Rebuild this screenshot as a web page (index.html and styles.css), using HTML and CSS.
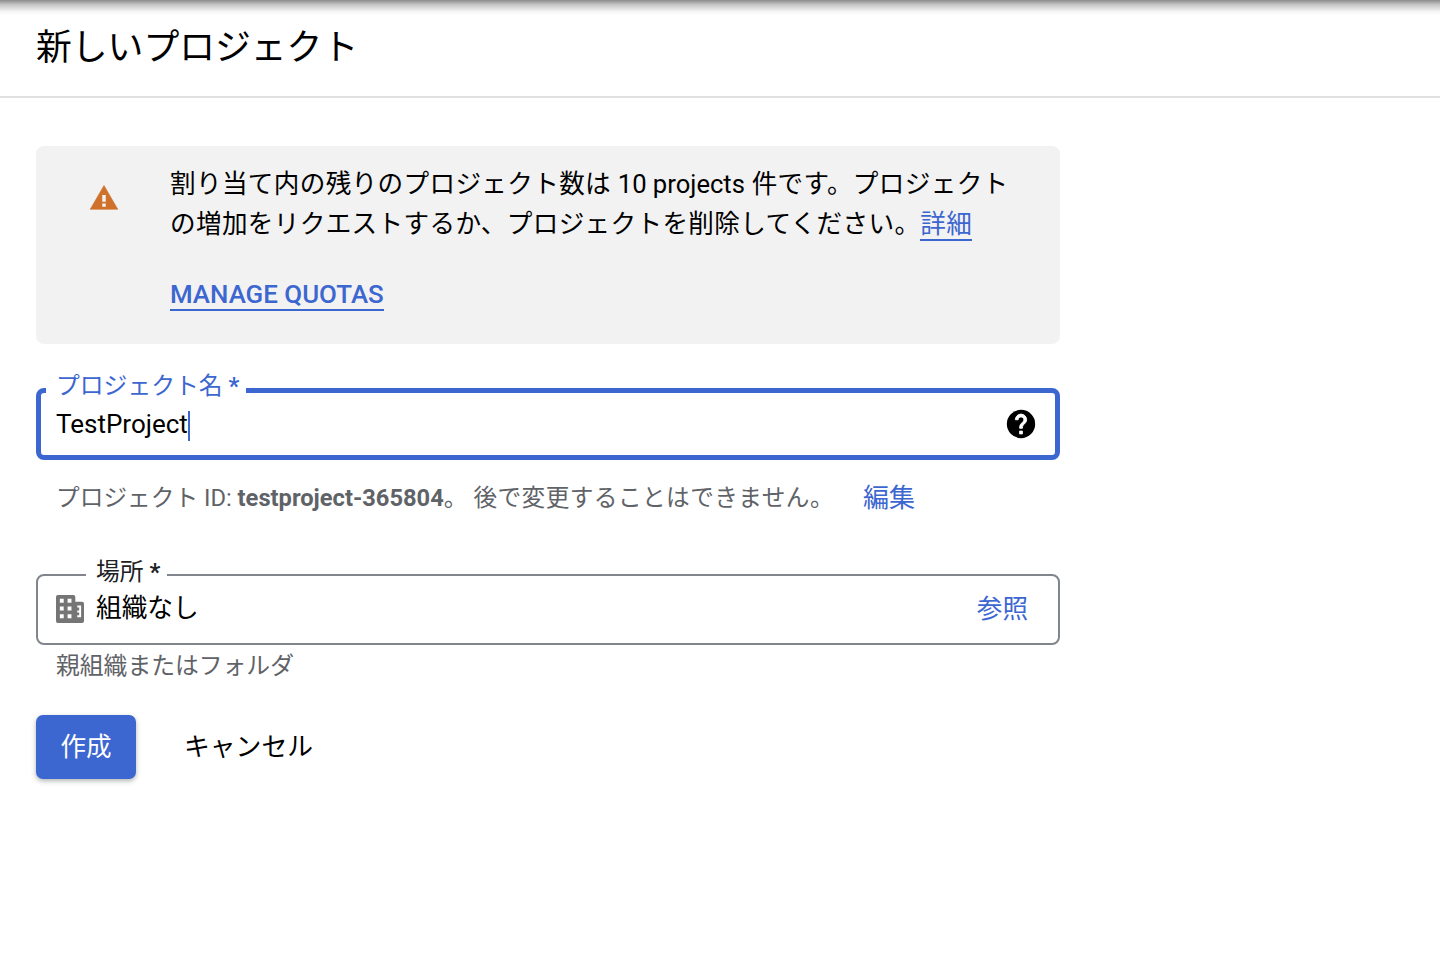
FILE: index.html
```html
<!DOCTYPE html>
<html lang="ja">
  <head>
    <meta charset="UTF-8" />
    <title>新しいプロジェクト</title>
    <link rel="stylesheet" href="styles.css">
  </head>
  <body>
    <div class="top-shadow"></div>
    <header class="header">
      <h1>新しいプロジェクト</h1>
    </header>

    <main class="content">
      <div class="notice">
        <div class="notice-icon">
          <svg width="30" height="30" viewBox="0 0 24 24">
            <path fill="#cf712b" stroke="#cf712b" stroke-width="0.5" stroke-linejoin="round" d="M1 21h22L12 2 1 21z"/>
            <path fill="#f2f2f2" d="M10.6 9.6h2.8V15h-2.8zM10.6 16.3h2.8V19h-2.8z"/>
          </svg>
        </div>
        <div class="notice-body">
          <p>割り当て内の残りのプロジェクト数は <span class="latin">10 projects</span> 件です。プロジェクトの増加をリクエストするか、プロジェクトを削除してください。<a href="#">詳細</a></p>
          <a class="quota-link" href="#">MANAGE QUOTAS</a>
        </div>
      </div>

      <div class="field field-active">
        <span class="field-label">プロジェクト名 <span class="req">*</span></span>
        <span class="field-value">TestProject<span class="caret"></span></span>
        <svg class="help" width="34" height="34" viewBox="0 0 24 24">
          <circle cx="12" cy="12" r="10" fill="#000"/>
          <path fill="#fff" stroke="#fff" stroke-width="0.6" d="M13 19h-2v-2h2v2zM15.07 11.25l-.9.92C13.45 12.9 13 13.5 13 15h-2v-.5c0-1.1.45-2.1 1.17-2.83l1.24-1.26c.37-.36.59-.86.59-1.41 0-1.1-.9-2-2-2s-2 .9-2 2H8c0-2.21 1.79-4 4-4s4 1.79 4 4c0 .88-.36 1.68-.93 2.25z"/>
        </svg>
      </div>
      <div class="project-id">
        <span>プロジェクト ID: <b>testproject-365804</b>。 <span class="id-note">後で変更することはできません。</span></span>
        <a href="#">編集</a>
      </div>

      <div class="field field-location">
        <span class="field-label">場所 <span class="req">*</span></span>
        <svg class="org-icon" width="28" height="28" viewBox="0 0 29 29">
          <path fill="#757575" fill-rule="evenodd" d="M2 0h16a2 2 0 0 1 2 2v5h7a2 2 0 0 1 2 2v18a2 2 0 0 1-2 2H2a2 2 0 0 1-2-2V2a2 2 0 0 1 2-2zM4 4v4h4V4zM12 4v4h4V4zM4 12v4h4v-4zM12 12v4h4v-4zM4 20v4h4v-4zM12 20v4h4v-4zM22 11h4v12h-4v-2h2v-3h-2v-2h2v-3h-2z"/>
        </svg>
        <span class="field-value">組織なし</span>
        <a class="browse" href="#">参照</a>
      </div>
      <div class="location-hint">親組織またはフォルダ</div>

      <div class="actions">
        <button class="btn-create">作成</button>
        <button class="btn-cancel">キャンセル</button>
      </div>
    </main>
  </body>
</html>
```

FILE: styles.css
```css
* {
  margin: 0;
  padding: 0;
  box-sizing: border-box;
}

body {
  position: relative;
  height: 962px;
  overflow: hidden;
  background: #fff;
  color: #000;
  font-family: Roboto, "Noto Sans CJK JP", sans-serif;
}

a {
  color: #3c66d0;
  text-decoration: none;
}

.top-shadow {
  position: absolute;
  top: 0;
  left: 0;
  width: 100%;
  height: 15px;
  background: linear-gradient(#8c8c8c, #c4c4c4 30%, #f4f4f4 75%, #fff);
}

.header {
  height: 98px;
  padding: 24px 36px 0;
  border-bottom: 2px solid #e0e0e0;
}

.header h1 {
  font-size: 35.8px;
  font-weight: 400;
  line-height: 48px;
}

.content {
  width: 1060px;
  padding: 48px 0 0 36px;
}

.notice {
  display: flex;
  height: 198px;
  background: #f2f2f2;
  border-radius: 8px;
}

.notice-icon {
  width: 134px;
  padding: 37px 0 0 53px;
}

.notice-body {
  width: 850px;
  padding-top: 18px;
  font-size: 25.6px;
  letter-spacing: 0.35px;
  line-height: 40px;
}

.latin {
  letter-spacing: 0;
}

.notice-body p a {
  border-bottom: 2px solid #3c66d0;
}

.quota-link {
  display: inline-block;
  margin-top: 35px;
  font-size: 25.9px;
  font-weight: 500;
  letter-spacing: 0;
  line-height: 30px;
  border-bottom: 2px solid #3c66d0;
}

.field {
  position: relative;
  display: flex;
  align-items: center;
  height: 72px;
  border-radius: 8px;
  font-size: 26px;
}

.field-active {
  margin-top: 44px;
  padding: 2px 0 0 15px;
  border: 5px solid #3c66d0;
}

.field-location {
  height: 71px;
  margin-top: 56px;
  padding: 0 0 7px 18px;
  border: 2px solid #80868b;
  font-size: 25.7px;
}

.field-location .field-value {
  margin-bottom: 2px;
}

.field-label {
  position: absolute;
  background: #fff;
  padding: 0 7px 0 10px;
  font-size: 23.8px;
  line-height: 28px;
}

.req {
  font-weight: 700;
}

.field-active .field-label {
  top: -21px;
  left: 5px;
  color: #3c66d0;
}

.field-location .field-label {
  top: -18px;
  left: 48px;
  color: #202124;
}

.caret {
  display: inline-block;
  width: 2px;
  height: 30px;
  vertical-align: middle;
  background: #3c66d0;
}

.help {
  margin: 0 17px 2px auto;
}

.org-icon {
  margin: 5px 12px 0 0;
}

.browse {
  margin: 0 30px 0 auto;
  font-size: 25.6px;
}

.project-id {
  display: flex;
  height: 58px;
  padding: 20px 0 0 20px;
  color: #5f6368;
  font-size: 23.7px;
  line-height: 36px;
}

.id-note {
  letter-spacing: 0.4px;
}

.project-id a {
  margin-left: 29px;
  font-size: 26px;
}

.location-hint {
  padding: 4px 0 0 20px;
  color: #5f6368;
  font-size: 23.8px;
  line-height: 34px;
}

.actions {
  display: flex;
  align-items: center;
  gap: 48px;
  margin-top: 32px;
}

.btn-create,
.btn-cancel {
  border: 0;
  background: none;
  font-family: inherit;
  font-size: 25.8px;
  padding-bottom: 6px;
}

.btn-create {
  width: 100px;
  height: 64px;
  background: #3c66d0;
  color: #fff;
  font-size: 25.6px;
  border-radius: 7px;
  box-shadow: 0 2px 5px rgba(60, 64, 67, 0.4);
}
```
